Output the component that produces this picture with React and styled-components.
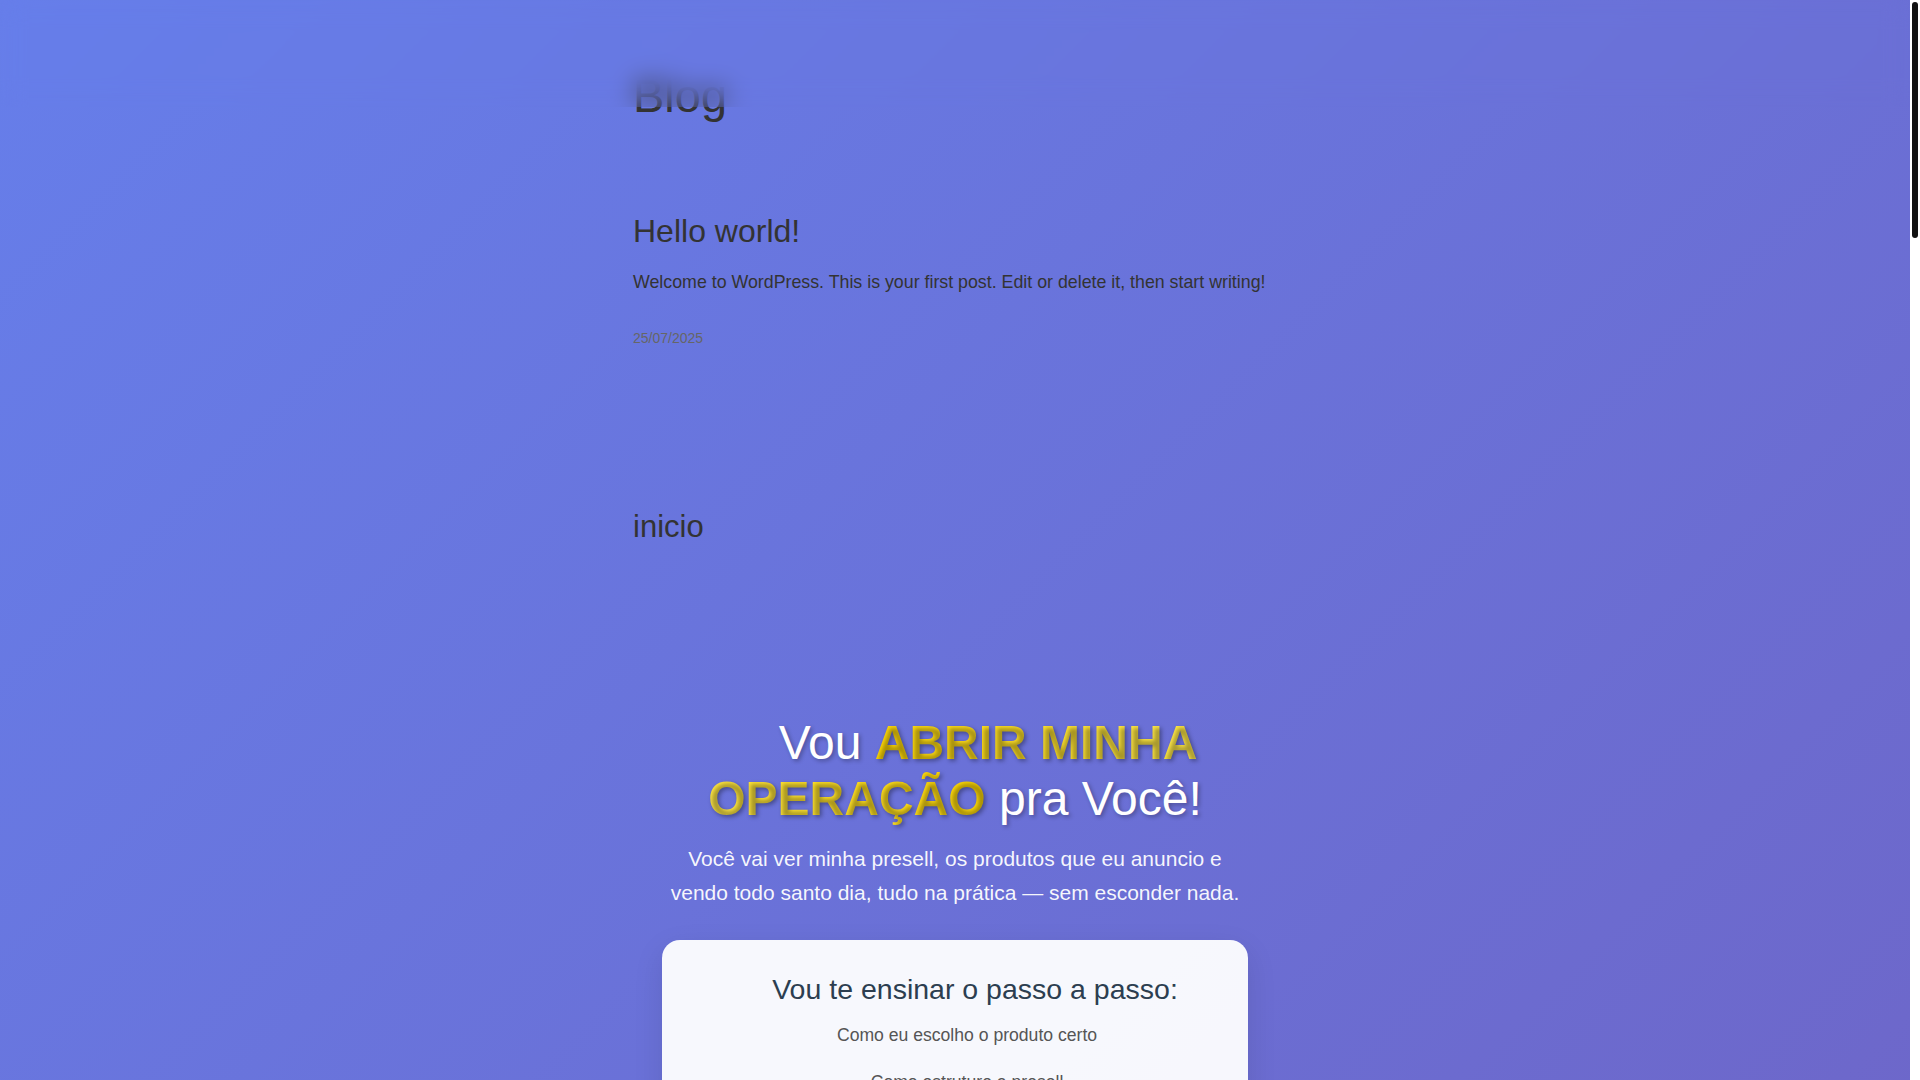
import styled, { createGlobalStyle } from "styled-components";

const GlobalStyle = createGlobalStyle`
  html, body {
    margin: 0;
    padding: 0;
    height: 100%;
    overflow: hidden;
  }
  body {
    font-family: "Liberation Sans", Arial, sans-serif;
    color: #333;
  }
`;

const steps = [
  "Como eu escolho o produto certo",
  "Como estruture a presell",
  "Como eu crio os anúncios",
  "Como eu acompanho os resultados",
  "Como eu escalo o que funciona",
];

function App() {
  return (
    <>
      <GlobalStyle />
      <Shell>
        <Viewport>
          <TopBar />
          <Page>
            <Column>
              <SiteTitle>Blog</SiteTitle>

              <Post>
                <PostTitle>Hello world!</PostTitle>
                <Excerpt>
                  Welcome to WordPress. This is your first post. Edit or delete
                  it, then start writing!
                </Excerpt>
                <PostDate>25/07/2025</PostDate>
              </Post>

              <PageTitle>inicio</PageTitle>

              <Hero>
                <HeroTitle>
                  Vou <Gold>ABRIR MINHA OPERAÇÃO</Gold> pra Você!
                </HeroTitle>
                <HeroText>
                  Você vai ver minha presell, os produtos que eu anuncio e
                  vendo todo santo dia, tudo na prática — sem esconder nada.
                </HeroText>

                <Card>
                  <CardTitle>Vou te ensinar o passo a passo:</CardTitle>
                  <Steps>
                    {steps.map((s) => (
                      <Step key={s}>{s}</Step>
                    ))}
                  </Steps>
                </Card>
              </Hero>
            </Column>
          </Page>
        </Viewport>
        <ScrollRail>
          <ScrollThumb />
        </ScrollRail>
      </Shell>
    </>
  );
}

const Shell = styled.div`
  display: flex;
  height: 100vh;
`;

const Viewport = styled.div`
  flex: 1;
  min-width: 0;
  overflow: hidden;
  position: relative;
`;

const ScrollRail = styled.div`
  width: 10px;
  flex-shrink: 0;
  background: #fff;
  padding: 2px;
  box-sizing: border-box;
`;

const ScrollThumb = styled.div`
  height: 236px;
  background: #111;
  border-radius: 3px;
`;

const TopBar = styled.header`
  position: absolute;
  top: 0;
  left: 0;
  right: 0;
  height: 107px;
  z-index: 10;
  backdrop-filter: blur(12px);
  -webkit-backdrop-filter: blur(12px);
`;

const Page = styled.div`
  min-height: 4860px;
  background: linear-gradient(135deg, #667eea 0%, #764ba2 100%);
  padding-top: 69px;
  box-sizing: border-box;
`;

const Column = styled.main`
  max-width: 644px;
  margin: 0 auto;
`;

const SiteTitle = styled.h1`
  margin: 0;
  font-size: 47px;
  line-height: 1.15;
  font-weight: 400;
  color: #333;
`;

const Post = styled.article`
  margin-top: 89px;
`;

const PostTitle = styled.h2`
  margin: 0;
  font-size: 32px;
  line-height: 1.2;
  font-weight: 400;
  color: #333;
`;

const Excerpt = styled.p`
  margin: 18px 0 0;
  font-size: 17.8px;
  line-height: 1.6;
  color: #333;
`;

const PostDate = styled.time`
  display: block;
  margin-top: 30px;
  font-size: 14px;
  line-height: 1.6;
  color: #666;
`;

const PageTitle = styled.h2`
  margin: 159px 0 0;
  font-size: 31px;
  line-height: 1.2;
  font-weight: 400;
  color: #333;
`;

const Hero = styled.section`
  margin-top: 170px;
  text-align: center;
`;

const HeroTitle = styled.h1`
  margin: 0;
  font-size: 48px;
  line-height: 1.15;
  font-weight: 400;
  color: #fff;
  text-indent: 66px;
  text-shadow: 2px 2px 4px rgba(0, 0, 0, 0.3);
`;

const Gold = styled.span`
  font-weight: 700;
  background: linear-gradient(45deg, #ffd700, #ffe94a, #ffd700);
  -webkit-background-clip: text;
  background-clip: text;
  -webkit-text-fill-color: transparent;
  text-shadow: 2px 2px 4px rgba(0, 0, 0, 0.35);
`;

const HeroText = styled.p`
  max-width: 586px;
  margin: 16px auto 0;
  font-size: 21px;
  line-height: 1.63;
  color: rgba(255, 255, 255, 0.95);
`;

const Card = styled.div`
  max-width: 586px;
  margin: 30px auto 0;
  padding: 32px 40px 40px;
  box-sizing: border-box;
  background: rgba(255, 255, 255, 0.95);
  border-radius: 18px;
  box-shadow: 0 10px 30px rgba(0, 0, 0, 0.1);
`;

const CardTitle = styled.h2`
  margin: 0 0 15px;
  padding-left: 40px;
  font-size: 28.5px;
  line-height: 1.2;
  font-weight: 400;
  color: #2c3e50;
`;

const Steps = styled.ul`
  list-style: none;
  margin: 0;
  padding: 0;
`;

const Step = styled.li`
  padding-left: 24px;
  margin-bottom: 18px;
  font-size: 17.6px;
  line-height: 1.6;
  color: #555;
`;

export default App;
